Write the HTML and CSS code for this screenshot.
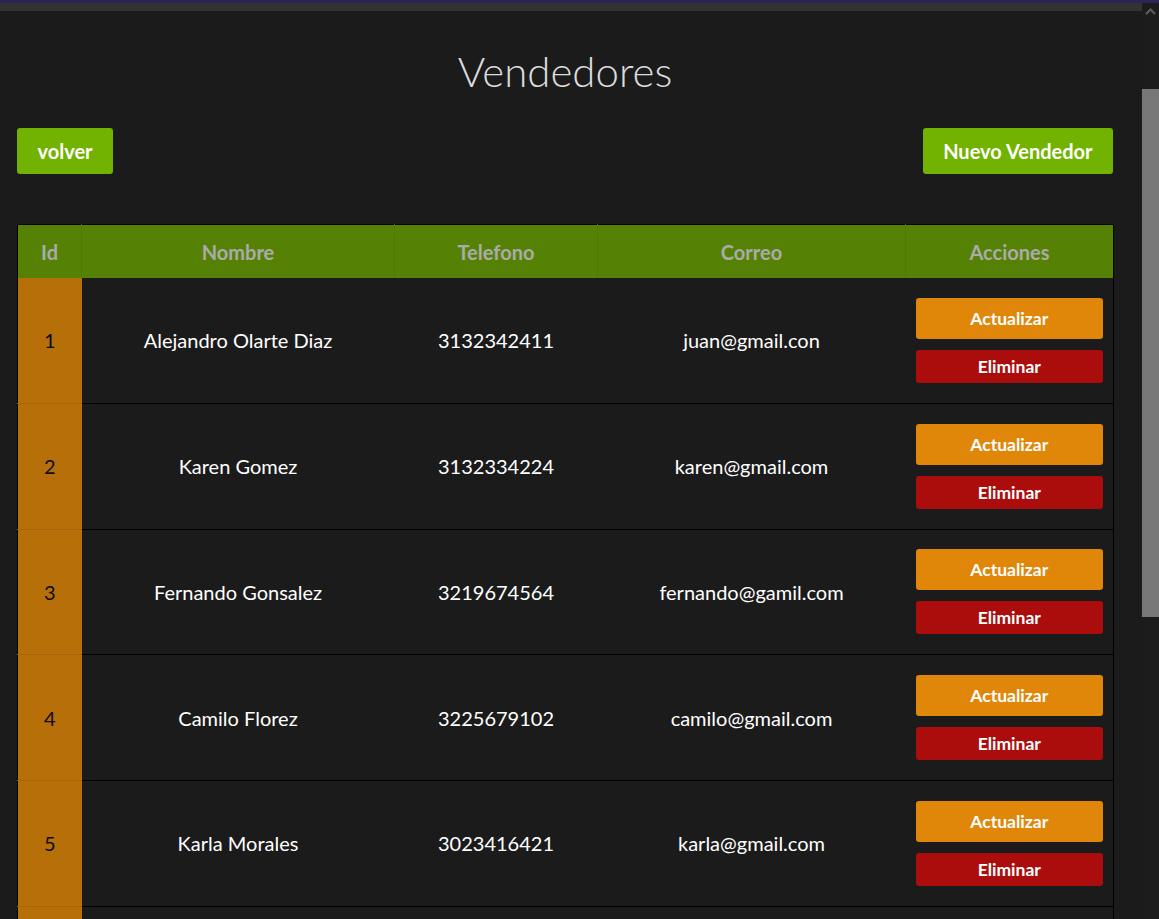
FILE: index.html
```html
<!DOCTYPE html>
<html lang="es">
<head>
<meta charset="utf-8">
<title>Vendedores</title>
<link rel="stylesheet" href="styles.css">
</head>
<body>
<div class="topstrip"></div>
<div class="frame">
  <div class="main">
    <div class="navedge"></div>
    <div class="content">
      <h1 class="title">Vendedores</h1>
      <div class="toolbar">
        <a class="btn btn-green">volver</a>
        <a class="btn btn-green">Nuevo Vendedor</a>
      </div>
      <table class="grid">
        <colgroup>
          <col class="c-id"><col class="c-name"><col class="c-tel"><col class="c-mail"><col class="c-act">
        </colgroup>
        <thead>
          <tr><th>Id</th><th>Nombre</th><th>Telefono</th><th>Correo</th><th>Acciones</th></tr>
        </thead>
        <tbody>
          <tr><td class="id">1</td><td>Alejandro Olarte Diaz</td><td>3132342411</td><td>juan@gmail.con</td><td class="act"><a class="abtn upd">Actualizar</a><a class="abtn del">Eliminar</a></td></tr>
          <tr><td class="id">2</td><td>Karen Gomez</td><td>3132334224</td><td>karen@gmail.com</td><td class="act"><a class="abtn upd">Actualizar</a><a class="abtn del">Eliminar</a></td></tr>
          <tr><td class="id">3</td><td>Fernando Gonsalez</td><td>3219674564</td><td>fernando@gamil.com</td><td class="act"><a class="abtn upd">Actualizar</a><a class="abtn del">Eliminar</a></td></tr>
          <tr><td class="id">4</td><td>Camilo Florez</td><td>3225679102</td><td>camilo@gmail.com</td><td class="act"><a class="abtn upd">Actualizar</a><a class="abtn del">Eliminar</a></td></tr>
          <tr><td class="id">5</td><td>Karla Morales</td><td>3023416421</td><td>karla@gmail.com</td><td class="act"><a class="abtn upd">Actualizar</a><a class="abtn del">Eliminar</a></td></tr>
          <tr><td class="id"></td><td></td><td></td><td></td><td class="act"></td></tr>
        </tbody>
      </table>
    </div>
  </div>
  <div class="scrollbar">
    <div class="sb-btn">
      <svg width="11" height="7" viewBox="0 0 11 7"><polyline points="1,6 5.5,1.5 10,6" fill="none" stroke="#5d5d5d" stroke-width="2"/></svg>
    </div>
    <div class="sb-space"></div>
    <div class="sb-thumb"></div>
  </div>
</div>
</body>
</html>
```

FILE: styles.css
```css
html, body {
  margin: 0;
  padding: 0;
  height: 100%;
  overflow: hidden;
}
body {
  background: #1b1b1b;
  font-family: Lato, "Liberation Sans", sans-serif;
  color: #fff;
}
.topstrip {
  height: 3px;
  background: #2e2358;
}
.frame {
  display: flex;
  height: calc(100vh - 3px);
}
.main {
  flex: 1;
  overflow: hidden;
}
.navedge {
  height: 8px;
  background: #333333;
}
.content {
  padding: 0 29px 0 17px;
}
.title {
  margin: 0;
  padding-top: 35px;
  height: 50px;
  line-height: 50px;
  text-align: center;
  font-size: 42px;
  font-weight: 300;
  color: #dcdcdc;
}
.toolbar {
  display: flex;
  justify-content: space-between;
  margin-top: 32px;
}
.btn {
  display: inline-flex;
  align-items: center;
  justify-content: center;
  height: 46px;
  padding: 0 20.5px;
  border-radius: 3px;
  font-size: 20px;
  font-weight: 700;
  color: #fff;
  text-decoration: none;
}
.btn-green {
  background: #71b300;
}
.grid {
  margin-top: 50px;
  width: 1096px;
  border-collapse: collapse;
  table-layout: fixed;
  border-top: 1px solid #000;
  border-left: 1px solid #000;
  border-right: 1px solid #000;
}
.c-id { width: 64px; }
.c-name { width: 313px; }
.c-tel { width: 203px; }
.c-mail { width: 308px; }
.c-act { width: 208px; }
.grid th {
  height: 53px;
  padding: 0;
  background: #558204;
  color: #ababab;
  font-size: 20px;
  font-weight: 700;
  text-align: center;
  border-left: 1px solid #4f7a05;
}
.grid th:first-child {
  border-left: none;
}
.grid td {
  height: 124.75px;
  padding: 0;
  text-align: center;
  font-size: 20px;
  color: #fff;
  border-bottom: 1px solid #000;
}
.grid td.id {
  background: #b76f0a;
  color: #0c0c0c;
  border-bottom-color: #a8660c;
}
.grid td.act {
  padding: 0 10px;
}
.abtn {
  display: flex;
  align-items: center;
  justify-content: center;
  border-radius: 3px;
  font-weight: 700;
  font-size: 17.5px;
  color: #fff;
}
.upd {
  height: 41px;
  background: #e0870a;
}
.del {
  height: 33px;
  margin-top: 11px;
  background: #ab0d0d;
}
.scrollbar {
  width: 17px;
  display: flex;
  flex-direction: column;
  background: #1c1c1c;
}
.sb-btn {
  height: 17px;
  display: flex;
  align-items: center;
  justify-content: center;
}
.sb-space {
  height: 69px;
}
.sb-thumb {
  height: 528px;
  background: #787878;
}
```
